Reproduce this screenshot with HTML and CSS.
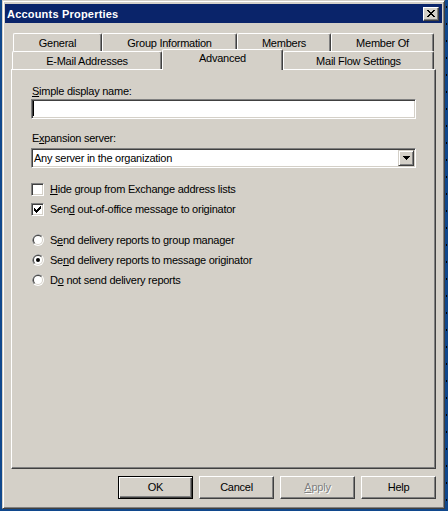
FILE: index.html
```html
<!DOCTYPE html>
<html>
<head>
<meta charset="utf-8">
<title>Accounts Properties</title>
<link rel="stylesheet" href="styles.css">
</head>
<body>
<div class="window">
  <div class="titlebar">
    <span class="title">Accounts Properties</span>
    <span class="close-btn">
      <svg width="8" height="7" viewBox="0 0 8 7" shape-rendering="crispEdges">
        <path d="M0 0h2v1H0zM6 0h2v1H6zM1 1h2v1H1zM5 1h2v1H5zM2 2h4v1H2zM3 3h2v1H3zM2 4h4v1H2zM1 5h2v1H1zM5 5h2v1H5zM0 6h2v1H0zM6 6h2v1H6z" fill="#000"/>
      </svg>
    </span>
  </div>
  <div class="dialog">
    <div class="tabs">
      <div class="tabrow back">
        <div class="tab t-general">General</div>
        <div class="tab t-group">Group Information</div>
        <div class="tab t-members">Members</div>
        <div class="tab t-memberof">Member Of</div>
      </div>
      <div class="tabrow front">
        <div class="tab t-email">E-Mail Addresses</div>
        <div class="tab t-adv selected">Advanced</div>
        <div class="tab t-flow">Mail Flow Settings</div>
      </div>
    </div>
    <div class="panel">
      <div class="label first"><u>S</u>imple display name:</div>
      <div class="textbox"><span class="caret"></span></div>
      <div class="label second">E<u>x</u>pansion server:</div>
      <div class="combo">
        <span class="combo-text">Any server in the organization</span>
        <span class="combo-btn">
          <svg width="7" height="4" viewBox="0 0 7 4" shape-rendering="crispEdges">
            <path d="M0 0h7v1H0zM1 1h5v1H1zM2 2h3v1H2zM3 3h1v1H3z" fill="#000"/>
          </svg>
        </span>
      </div>
      <div class="group">
        <div class="opt">
          <span class="check"></span>
          <span class="opt-text"><u>H</u>ide group from Exchange address lists</span>
        </div>
        <div class="opt">
          <span class="check">
            <svg width="7" height="7" viewBox="0 0 7 7" shape-rendering="crispEdges">
              <path d="M6 0h1v1H6zM5 1h2v1H5zM0 2h1v1H0zM4 2h3v1H4zM0 3h2v1H0zM3 3h3v1H3zM0 4h5v1H0zM1 5h3v1H1zM2 6h1v1H2z" fill="#000"/>
            </svg>
          </span>
          <span class="opt-text">Sen<u>d</u> out-of-office message to originator</span>
        </div>
      </div>
      <div class="group">
        <div class="opt">
          <span class="radio">
            <svg width="12" height="12" viewBox="0 0 12 12">
              <circle cx="6" cy="6" r="6" fill="#fff"/>
              <path d="M1.76 10.24A6 6 0 0 1 10.24 1.76Z" fill="#808080"/>
              <circle cx="6" cy="6" r="5" fill="#d4d0c8"/>
              <path d="M2.46 9.54A5 5 0 0 1 9.54 2.46Z" fill="#404040"/>
              <circle cx="6" cy="6" r="4" fill="#fff"/>
            </svg>
          </span>
          <span class="opt-text">S<u>e</u>nd delivery reports to group manager</span>
        </div>
        <div class="opt">
          <span class="radio">
            <svg width="12" height="12" viewBox="0 0 12 12">
              <circle cx="6" cy="6" r="6" fill="#fff"/>
              <path d="M1.76 10.24A6 6 0 0 1 10.24 1.76Z" fill="#808080"/>
              <circle cx="6" cy="6" r="5" fill="#d4d0c8"/>
              <path d="M2.46 9.54A5 5 0 0 1 9.54 2.46Z" fill="#404040"/>
              <circle cx="6" cy="6" r="4" fill="#fff"/>
              <circle cx="6" cy="6" r="2" fill="#000"/>
            </svg>
          </span>
          <span class="opt-text">Se<u>n</u>d delivery reports to message originator</span>
        </div>
        <div class="opt">
          <span class="radio">
            <svg width="12" height="12" viewBox="0 0 12 12">
              <circle cx="6" cy="6" r="6" fill="#fff"/>
              <path d="M1.76 10.24A6 6 0 0 1 10.24 1.76Z" fill="#808080"/>
              <circle cx="6" cy="6" r="5" fill="#d4d0c8"/>
              <path d="M2.46 9.54A5 5 0 0 1 9.54 2.46Z" fill="#404040"/>
              <circle cx="6" cy="6" r="4" fill="#fff"/>
            </svg>
          </span>
          <span class="opt-text">D<u>o</u> not send delivery reports</span>
        </div>
      </div>
    </div>
    <div class="buttons">
      <div class="btn default">OK</div>
      <div class="btn">Cancel</div>
      <div class="btn disabled"><u>A</u>pply</div>
      <div class="btn">Help</div>
    </div>
  </div>
</div>
</body>
</html>
```
FILE: styles.css
```css
* {
  box-sizing: border-box;
}

html, body {
  margin: 0;
  padding: 0;
}

body {
  width: 448px;
  height: 511px;
  overflow: hidden;
  background:
    repeating-linear-gradient(to bottom, #000 0 2px, transparent 2px 17px) 446px 6px / 1px 100% no-repeat,
    #10488c;
  font-family: "Liberation Sans", Arial, sans-serif;
  font-size: 11px;
  line-height: 13px;
  letter-spacing: -0.25px;
  color: #000;
}

.window {
  margin-left: 2px;
  width: 443px;
  height: 509px;
  background: #d4d0c8;
  border: 1px solid;
  border-color: #d4d0c8 #404040 #404040 #d4d0c8;
  box-shadow: inset 1px 1px #fff, inset -1px -1px #808080;
  padding: 3px 2px 2px 2px;
  display: flex;
  flex-direction: column;
}

.titlebar {
  height: 19px;
  background: #0a246a;
  color: #fff;
  display: flex;
  align-items: center;
  justify-content: space-between;
  padding: 0 3px 0 2px;
}

.title {
  font-weight: bold;
  letter-spacing: 0.2px;
  padding-top: 1px;
}

.close-btn {
  width: 16px;
  height: 14px;
  background: #d4d0c8;
  border: 1px solid;
  border-color: #fff #404040 #404040 #fff;
  box-shadow: inset -1px -1px #808080;
  display: flex;
  align-items: center;
  justify-content: center;
  padding: 0 1px 1px 0;
}

.close-btn svg {
  display: block;
}

.dialog {
  flex: 1;
  display: flex;
  flex-direction: column;
  padding: 10px 6px 7px 6px;
}

.tabs {
  height: 36px;
  display: flex;
  flex-direction: column;
}

.tabrow {
  height: 18px;
  display: flex;
}

.tabrow.back {
  padding-left: 2px;
}

.tabrow.front {
  padding-left: 1px;
}

.tab {
  height: 18px;
  border-top: 1px solid #fff;
  border-left: 1px solid #fff;
  border-right: 1px solid #404040;
  border-radius: 2px 2px 0 0;
  box-shadow: inset -1px 0 #808080;
  text-align: center;
  padding-top: 3px;
  white-space: nowrap;
}

.t-general { width: 89px; }
.t-group { width: 135px; }
.t-members { width: 94px; }
.t-memberof { width: 103px; }
.t-email { width: 150px; }
.t-adv { width: 121px; }
.t-flow { width: 151px; }

.tab.selected {
  position: relative;
  z-index: 1;
  height: 21px;
  margin-top: -2px;
  padding-top: 2px;
  background: #d4d0c8;
}

.panel {
  height: 400px;
  border: 1px solid;
  border-color: #fff #404040 #404040 #fff;
  box-shadow: inset -1px -1px #808080;
  padding: 15px 0 0 19px;
}

.label {
  margin-left: 1px;
}

.label.first {
  margin-bottom: 1px;
}

.label.second {
  margin-top: 13px;
  margin-bottom: 3px;
}

.textbox,
.combo {
  width: 385px;
  height: 20px;
  background: #fff;
  border: 1px solid;
  border-color: #808080 #fff #fff #808080;
  box-shadow: inset 1px 1px #404040, inset -1px -1px #d4d0c8;
  padding: 1px;
}

.caret {
  display: block;
  width: 1px;
  height: 15px;
  background: #000;
}

.combo {
  display: flex;
  align-items: center;
}

.combo-text {
  flex: 1;
  padding-left: 1px;
}

.combo-btn {
  width: 16px;
  height: 16px;
  background: #d4d0c8;
  border: 1px solid;
  border-color: #d4d0c8 #404040 #404040 #d4d0c8;
  box-shadow: inset 1px 1px #fff, inset -1px -1px #808080;
  display: flex;
  align-items: center;
  justify-content: center;
}

.combo-btn svg {
  display: block;
}

.group {
  margin-top: 11px;
}

.opt {
  height: 20px;
  display: flex;
  align-items: center;
}

.check {
  width: 13px;
  height: 13px;
  background: #fff;
  border: 1px solid;
  border-color: #808080 #fff #fff #808080;
  box-shadow: inset 1px 1px #404040, inset -1px -1px #d4d0c8;
  display: flex;
  align-items: center;
  justify-content: center;
}

.check svg {
  display: block;
}

.radio {
  width: 13px;
  height: 12px;
  padding-left: 1px;
  display: flex;
}

.radio svg {
  display: block;
}

.opt-text {
  margin-left: 6px;
  white-space: nowrap;
}

.buttons {
  margin-top: 7px;
  height: 23px;
  display: flex;
  justify-content: flex-end;
  gap: 6px;
}

.btn {
  width: 75px;
  height: 23px;
  border: 1px solid;
  border-color: #fff #404040 #404040 #fff;
  box-shadow: inset -1px -1px #808080;
  display: flex;
  align-items: center;
  justify-content: center;
}

.btn.default {
  border-color: #000;
  box-shadow: inset 1px 1px #fff, inset -1px -1px #404040, inset -2px -2px #808080;
}

.btn.disabled {
  color: #808080;
  text-shadow: 1px 1px #fff;
}
```
